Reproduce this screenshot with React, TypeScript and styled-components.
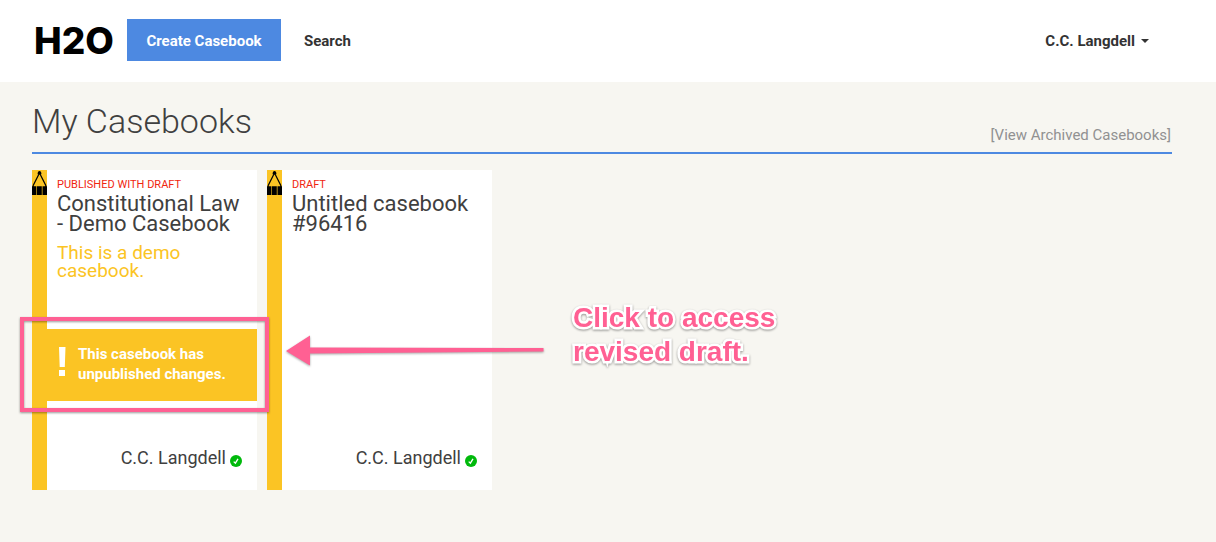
import React from "react";
import styled, { createGlobalStyle } from "styled-components";

const blue = "#4d89e1";
const yellow = "#fbc424";
const pink = "#ff6093";
const ink = "#3f4040";

const GlobalStyle = createGlobalStyle`
  *, *::before, *::after { box-sizing: border-box; }
  html, body { margin: 0; min-height: 100%; background: #f7f6f1; }
  body { color: ${ink}; font-family: Roboto, "Liberation Sans", sans-serif; }
  h1, h2, p { margin: 0; font-weight: 400; }
  a { color: inherit; text-decoration: none; }
  button { font: inherit; border: 0; cursor: pointer; }
`;

const Header = styled.header`
  display: flex;
  align-items: center;
  height: 82px;
  padding: 0 67px 0 34px;
  background: #fff;
  color: #333;
  font-size: 15px;
  font-weight: 700;
`;

const Logo = styled.a`
  width: 93px;
  color: #000;
  font-family: Inter, "Liberation Sans", sans-serif;
  font-size: 37px;
  font-weight: 800;
  line-height: 42px;
`;

const CreateButton = styled.button`
  width: 154px;
  height: 42px;
  margin-bottom: 2px;
  padding: 2px 0 0;
  background: ${blue};
  color: #fff;
`;

const SearchLink = styled.a`
  margin-left: 23px;
`;

const UserMenu = styled.button`
  display: flex;
  align-items: center;
  gap: 6px;
  margin-left: auto;
  padding: 0;
  background: none;
  color: inherit;
`;

const Main = styled.main`
  padding: 16px 44px 52px 32px;
`;

const TitleBar = styled.div`
  display: flex;
  justify-content: space-between;
  align-items: flex-end;
  height: 56px;
  padding: 0 1px 7px 0;
  border-bottom: 2px solid ${blue};
`;

const Title = styled.h1`
  font-size: 34px;
  line-height: 48px;
  && { font-weight: 300; }
`;

const ArchiveLink = styled.a`
  color: #919191;
  font-size: 15px;
  line-height: 20px;
`;

const Shelf = styled.div`
  display: flex;
  flex-wrap: wrap;
  gap: 10px;
  margin-top: 16px;
`;

const Slot = styled.div`
  position: relative;
`;

const Card = styled.a`
  display: grid;
  grid-template-columns: 15px 1fr;
  width: 225px;
  height: 320px;
  background: #fff;
`;

const Spine = styled.div`
  background: ${yellow};

  svg { display: block; }
`;

const Body = styled.div`
  display: flex;
  flex-direction: column;
  padding: 8px 0 20px;
`;

const Status = styled.p`
  padding: 0 10px;
  color: #f0250f;
  font-size: 11px;
  line-height: 14px;
`;

const CardTitle = styled.h2`
  padding: 2px 10px 0;
  font-size: 22px;
  line-height: 20px;
`;

const Subtitle = styled.p`
  padding: 10px 10px 0;
  color: ${yellow};
  font-size: 19px;
  line-height: 18px;
`;

const Notice = styled.p`
  display: flex;
  align-items: flex-start;
  gap: 11px;
  height: 72px;
  margin-top: 49px;
  padding: 15px 0 0 11px;
  background: ${yellow};
  color: #fff;
  font-size: 15px;
  line-height: 20px;

  && { font-weight: 700; }

  svg { margin-top: 3px; }
`;

const Author = styled.p`
  display: flex;
  justify-content: flex-end;
  align-items: flex-end;
  gap: 4px;
  margin-top: auto;
  padding-right: 15px;
  font-size: 18px;
  line-height: 24px;

  svg { margin-bottom: 3px; }
`;

const Highlight = styled.div`
  position: absolute;
  top: 147px;
  left: -12px;
  width: 249px;
  height: 95px;
  border: 4px solid ${pink};
  filter: drop-shadow(0 1px 1px rgba(0, 0, 0, 0.4));
  pointer-events: none;
  z-index: 1;
`;

const Arrow = styled.svg`
  position: absolute;
  top: 160px;
  left: 252px;
  filter: drop-shadow(0 1px 1px rgba(0, 0, 0, 0.35));
  pointer-events: none;
  z-index: 1;
`;

const Callout = styled.p`
  position: absolute;
  top: 131px;
  left: 541px;
  color: ${pink};
  font-family: "Liberation Sans", Arial, sans-serif;
  font-size: 28px;
  line-height: 34px;
  white-space: nowrap;
  -webkit-text-stroke: 5px #fff;
  paint-order: stroke fill;
  stroke-linejoin: round;
  filter: drop-shadow(0 1px 1px rgba(0, 0, 0, 0.4));
  z-index: 1;

  && { font-weight: 700; }
`;

const Pencil = () => (
  <svg width="15" height="25" viewBox="0 0 15 25" aria-hidden="true">
    <path d="M7.5 3 1.2 15.500V17M7.5 3l6.3 12.500V17" fill="none" stroke="#000" strokeWidth="1.2" />
    <path d="M7.5 1C6.200 1 5.900 2 5.700 3.200L5.600 4.200h3.800l-.1-1C9.100 2 8.800 1 7.500 1Z" />
    <path d="M0 16.300h4.400V25H0zM5 16.300h4.800V25H5zM10.500 16.300H15V25h-4.500z" />
  </svg>
);

const Exclamation = () => (
  <svg width="9" height="29" viewBox="0 0 9 29" fill="#fff" aria-hidden="true">
    <path d="M1 0h6.500L6.800 20H1.700zM1 23h6v6H1z" />
  </svg>
);

const Verified = () => (
  <svg width="12" height="12" viewBox="0 0 12 12" role="img" aria-label="Verified">
    <circle cx="6" cy="6" r="6" fill="#00b90c" />
    <path d="M3.700 6.600 5.400 8.200 8 3.900" fill="none" stroke="#fff" strokeWidth="1.300" />
  </svg>
);

type BookProps = {
  status: string;
  title: string;
  subtitle?: string;
  changed?: boolean;
};

const Book = ({ status, title, subtitle, changed }: BookProps) => (
  <Card href="#">
    <Spine><Pencil /></Spine>
    <Body>
      <Status>{status}</Status>
      <CardTitle>{title}</CardTitle>
      {subtitle && <Subtitle>{subtitle}</Subtitle>}
      {changed && (
        <Notice>
          <Exclamation />
          <span>This casebook has<br />unpublished changes.</span>
        </Notice>
      )}
      <Author>C.C. Langdell<Verified /></Author>
    </Body>
  </Card>
);

export default function App() {
  return (
    <>
      <GlobalStyle />
      <Header>
        <Logo href="#">H2O</Logo>
        <CreateButton type="button">Create Casebook</CreateButton>
        <SearchLink href="#">Search</SearchLink>
        <UserMenu type="button">
          C.C. Langdell
          <svg width="8" height="4" viewBox="0 0 8 4" fill="#333" aria-hidden="true">
            <path d="M0 0h8L4 4z" />
          </svg>
        </UserMenu>
      </Header>
      <Main>
        <TitleBar>
          <Title>My Casebooks</Title>
          <ArchiveLink href="#">[View Archived Casebooks]</ArchiveLink>
        </TitleBar>
        <Shelf>
          <Slot>
            <Book
              status="PUBLISHED WITH DRAFT"
              title="Constitutional Law - Demo Casebook"
              subtitle="This is a demo casebook."
              changed
            />
            <Highlight />
            <Arrow width="262" height="42" viewBox="0 0 262 42" fill={pink}>
              <path d="M2 21 26 5.500V17.500L259.500 18V21.500L26 23.500V35.500z" />
            </Arrow>
            <Callout>Click to access<br />revised draft.</Callout>
          </Slot>
          <Book status="DRAFT" title="Untitled casebook #96416" />
        </Shelf>
      </Main>
    </>
  );
}
